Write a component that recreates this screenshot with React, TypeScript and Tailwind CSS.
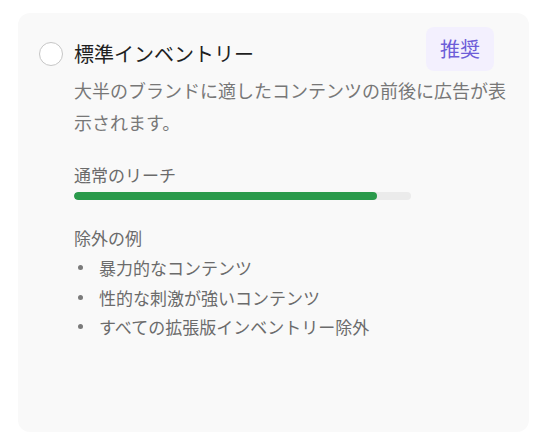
const exclusions = [
  '暴力的なコンテンツ',
  '性的な刺激が強いコンテンツ',
  'すべての拡張版インベントリー除外',
]

export default function App() {
  const reach = 90

  return (
    <div
      className="min-h-screen bg-white pt-[13px] pl-[18px]"
      style={{ fontFamily: '"Noto Sans CJK JP", "Noto Sans", sans-serif' }}
    >
      <div className="w-[511px] h-[419px] rounded-[12px] bg-[#f9f9f9] pt-[14px] pl-[21px] pr-[21px]">
        {/* Header */}
        <div className="flex items-start justify-between">
          <div className="flex items-center gap-[11px] mt-[15px]">
            <span className="block w-[24px] h-[24px] rounded-full border-[1.5px] border-[#c6c6c6] bg-white" />
            <span className="text-[20px] leading-[24px] text-[#1f1f1f]">標準インベントリー</span>
          </div>
          <span className="mr-[14px] flex h-[44px] items-center rounded-[8px] bg-[#f3f0fe] px-[14px] text-[20px] text-[#6c5dd8]">
            推奨
          </span>
        </div>

        <div className="pl-[35px]">
          <p className="mt-[3px] text-[18px] leading-[32px] text-[#777777]">
            大半のブランドに適したコンテンツの前後に広告が表示されます。
          </p>

          {/* Reach */}
          <div className="mt-[25px] text-[17px] leading-[24px] text-[#6b6b6b]">通常のリーチ</div>
          <div className="mt-[5px] h-[8px] w-[337px] overflow-hidden rounded-full bg-[#ebebeb]">
            <div className="h-full rounded-full bg-[#2a9a4b]" style={{ width: `${reach}%` }} />
          </div>

          {/* Exclusions */}
          <div className="mt-[26px] text-[17px] leading-[24px] text-[#6b6b6b]">除外の例</div>
          <ul className="mt-[3px]">
            {exclusions.map((item) => (
              <li key={item} className="flex items-center text-[17px] leading-[29.5px] text-[#6b6b6b]">
                <span className="ml-[4px] mr-[16px] block h-[5px] w-[5px] rounded-full bg-[#7a7a7a]" />
                {item}
              </li>
            ))}
          </ul>
        </div>
      </div>
    </div>
  )
}
